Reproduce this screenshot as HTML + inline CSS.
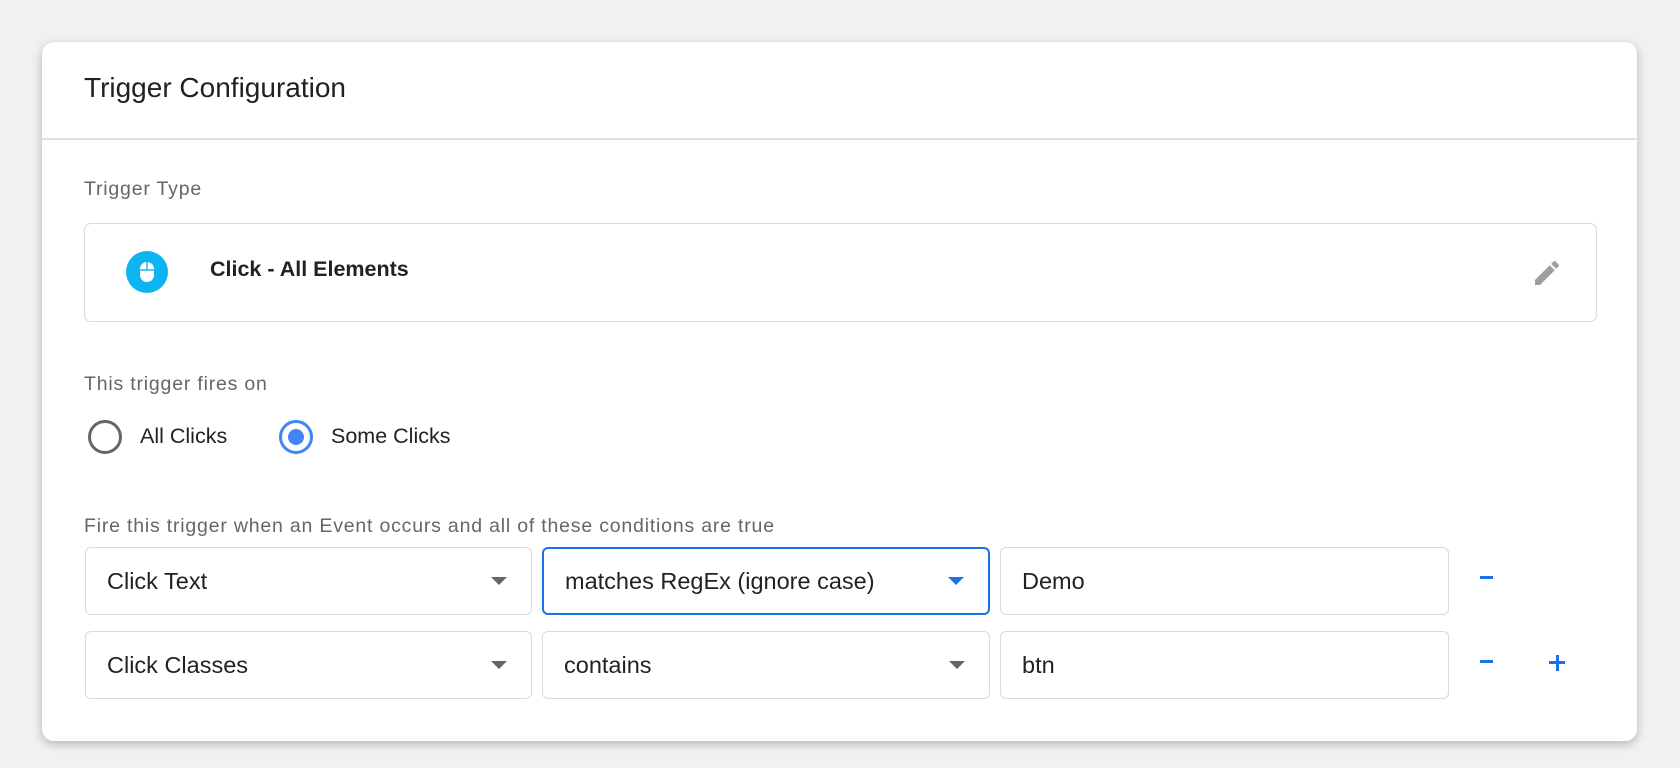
<!DOCTYPE html>
<html><head><meta charset="utf-8"><style>
*{box-sizing:border-box;margin:0;padding:0}
body{width:1680px;height:768px;background:#f0f1f3;font-family:"Liberation Sans",sans-serif;position:relative;overflow:hidden}
.card{position:absolute;left:42px;top:42px;width:1595px;height:699px;background:#fff;border-radius:12px;box-shadow:0 3px 10px rgba(0,0,0,.25)}
.abs{position:absolute;white-space:nowrap}
.hr{position:absolute;left:0;right:0;top:96px;height:2px;background:#e0e0e0}
.lbl{color:#666;font-size:19.5px;letter-spacing:0.8px}
.box{position:absolute;border:1.5px solid #dadada;border-radius:7px}
.field{position:absolute;border:1.5px solid #dadada;border-radius:6px;font-size:23.5px;color:#222;padding-left:21px;display:flex;align-items:center}
.arrow{position:absolute;right:24px;top:50%;margin-top:-4px;width:0;height:0;border-left:8px solid transparent;border-right:8px solid transparent;border-top:8px solid #666}
</style></head><body>
<div class="card">
<div class="abs" style="left:42px;top:30px;font-size:28px;color:#202124">Trigger Configuration</div>
<div class="hr"></div>
<div class="abs lbl" style="left:42px;top:136px">Trigger Type</div>
<div class="box" style="left:42px;top:181px;width:1513px;height:99px"></div>
<svg class="abs" style="left:84px;top:209px" width="42" height="42" viewBox="0 0 42 42"><circle cx="21" cy="21" r="21" fill="#0db4f0"/><rect x="14" y="11" width="14" height="20" rx="7" fill="#fff"/><rect x="20.3" y="11" width="1.4" height="8" fill="#0db4f0"/><rect x="14" y="18.3" width="14" height="1.4" fill="#0db4f0"/></svg>
<div class="abs" style="left:168px;top:215px;font-size:21.5px;font-weight:bold;color:#222">Click - All Elements</div>
<svg class="abs" style="left:1489px;top:215px" width="32" height="32" viewBox="0 0 24 24"><path d="M3 17.25V21h3.75L17.81 9.94l-3.75-3.75L3 17.25zM20.71 7.04a1 1 0 000-1.41l-2.34-2.34a1 1 0 00-1.41 0l-1.83 1.83 3.75 3.75 1.83-1.83z" fill="#9e9e9e"/></svg>
<div class="abs lbl" style="left:42px;top:331px">This trigger fires on</div>
<div class="abs" style="left:46px;top:378px;width:34px;height:34px;border:3px solid #666;border-radius:50%"></div>
<div class="abs" style="left:98px;top:382px;font-size:21.5px;color:#222">All Clicks</div>
<div class="abs" style="left:237px;top:378px;width:34px;height:34px;border:3px solid #4285f4;border-radius:50%"><div style="position:absolute;left:6px;top:6px;width:16px;height:16px;border-radius:50%;background:#4285f4"></div></div>
<div class="abs" style="left:289px;top:382px;font-size:21.5px;color:#222">Some Clicks</div>
<div class="abs lbl" style="left:42px;top:473px">Fire this trigger when an Event occurs and all of these conditions are true</div>
<div class="field" style="left:43px;top:505px;width:447px;height:68px">Click Text<div class="arrow"></div></div>
<div class="field" style="left:500px;top:505px;width:448px;height:68px;border:2.5px solid #1a73e8">matches RegEx (ignore case)<div class="arrow" style="border-top-color:#1a73e8"></div></div>
<div class="field" style="left:958px;top:505px;width:449px;height:68px">Demo</div>
<div class="field" style="left:43px;top:589px;width:447px;height:68px">Click Classes<div class="arrow"></div></div>
<div class="field" style="left:500px;top:589px;width:448px;height:68px">contains<div class="arrow"></div></div>
<div class="field" style="left:958px;top:589px;width:449px;height:68px">btn</div>
<div class="abs" style="left:1438px;top:534px;width:13px;height:3px;background:#1a73e8"></div>
<div class="abs" style="left:1438px;top:618px;width:13px;height:3px;background:#1a73e8"></div>
<div class="abs" style="left:1507px;top:619px;width:16px;height:3px;background:#1a73e8"></div>
<div class="abs" style="left:1513.5px;top:612.5px;width:3px;height:16px;background:#1a73e8"></div>
</div>
</body></html>
